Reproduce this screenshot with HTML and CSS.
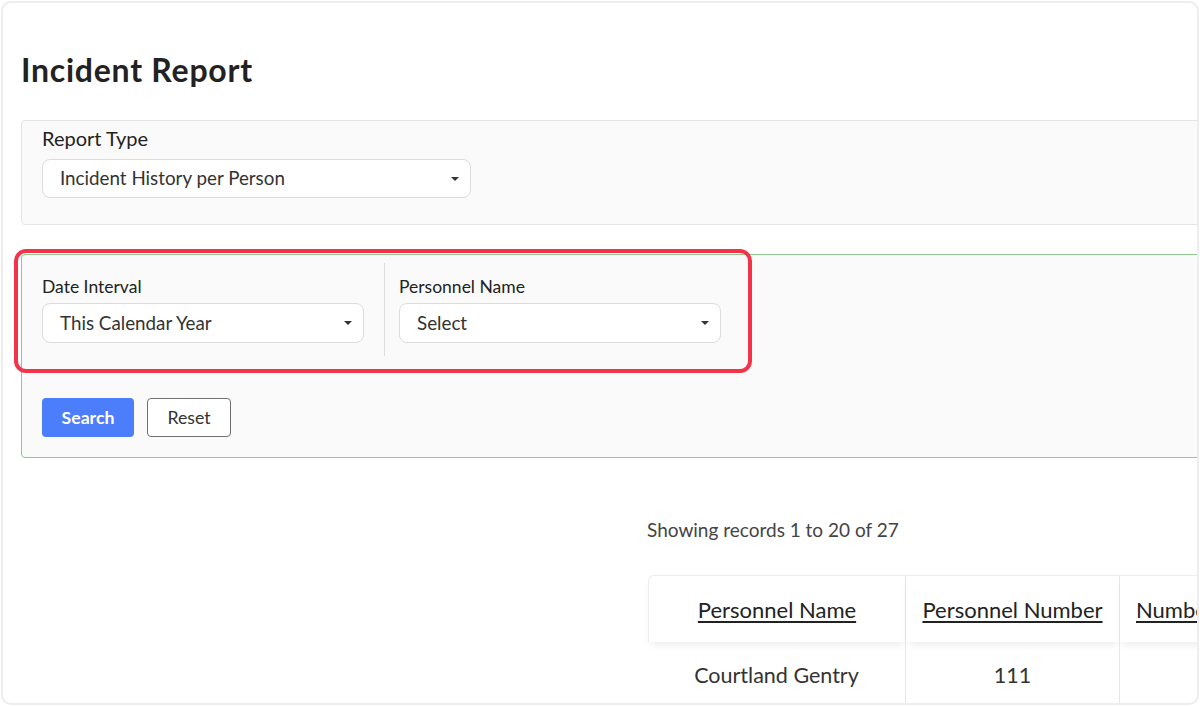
FILE: index.html
```html
<!DOCTYPE html>
<html lang="en">
<head>
	<meta charset="UTF-8">
	<title>Incident Report</title>
	<link rel="stylesheet" href="styles.css">
</head>
<body>
	<div class="page">
		<div class="content">
			<h1>Incident Report</h1>

			<div class="panel report_type">
				<label>Report Type</label>
				<div class="select">
					<span>Incident History per Person</span>
					<svg class="caret" viewBox="0 0 8 4"><path d="M0 0h8L4 4z"/></svg>
				</div>
			</div>

			<div class="panel filters">
				<div class="filter_row">
					<div class="field">
						<label>Date Interval</label>
						<div class="select">
							<span>This Calendar Year</span>
							<svg class="caret" viewBox="0 0 8 4"><path d="M0 0h8L4 4z"/></svg>
						</div>
					</div>
					<div class="field">
						<label>Personnel Name</label>
						<div class="select">
							<span>Select</span>
							<svg class="caret" viewBox="0 0 8 4"><path d="M0 0h8L4 4z"/></svg>
						</div>
					</div>
				</div>
				<div class="actions">
					<button class="btn_search">Search</button>
					<button class="btn_reset">Reset</button>
				</div>
				<div class="highlight"></div>
			</div>

			<div class="results">
				<div class="count">Showing records 1 to 20 of 27</div>
				<table>
					<thead>
						<tr>
							<th class="col_name"><a>Personnel Name</a></th>
							<th class="col_number"><a>Personnel Number</a></th>
							<th class="col_count"><a>Number of Incidents</a></th>
						</tr>
					</thead>
					<tbody>
						<tr>
							<td>Courtland Gentry</td>
							<td>111</td>
							<td>3</td>
						</tr>
					</tbody>
				</table>
			</div>
		</div>
	</div>
</body>
</html>
```

FILE: styles.css
```css
*{box-sizing:border-box;}
html,body{margin:0;height:100%;overflow:hidden;background:#fff;}
body{font-family:Lato,"Noto Sans",sans-serif;color:#222;}

.page{margin:1px;height:704px;border:2px solid #ececf1;border-radius:10px;overflow:hidden;background:#fff;}
.content{width:1400px;padding:49px 0 0 18px;}
h1{margin:0 0 32px;font-size:32px;line-height:36px;font-weight:700;letter-spacing:0.75px;color:#222;}

.panel{background:#fafafa;border:1px solid #e4e4e4;border-radius:4px;}
.report_type{padding:7px 20px 26px;}
.report_type label{display:block;font-size:20px;line-height:21px;margin-bottom:10px;}

.select{display:flex;align-items:center;justify-content:space-between;height:39px;padding:0 11px 0 17px;background:#fff;border:1px solid #dcdcdc;border-radius:8px;font-size:18.8px;color:#333;}
.select span{margin-top:-2px;}
.report_type .select{width:429px;}
.caret{width:8px;height:4px;fill:#333;}

.filters{position:relative;margin-top:29px;border-color:#90c890;padding:8px 20px 20px;}
.filter_row{display:flex;}
.field{padding:14px 20px 13px 0;}
.field+.field{border-left:1px solid #dedede;padding-left:14px;}
.field label{display:block;font-size:17.5px;line-height:20px;margin-bottom:6px;}
.field .select{width:322px;height:40px;}

.actions{display:flex;gap:13px;margin-top:42px;}
button{font-family:inherit;font-size:17.7px;height:39px;border-radius:4px;cursor:pointer;}
.btn_search{width:92px;background:#4c7dfb;border:none;color:#fff;font-weight:700;}
.btn_reset{width:84px;background:#fff;border:1px solid #707070;color:#333;}

.highlight{position:absolute;left:-8px;top:-6px;width:738px;height:124px;border:4px solid #f3334a;border-radius:12px;pointer-events:none;}

.results{margin:61px 0 0 626px;}
.count{font-size:19px;line-height:22px;color:#444;}
table{margin:34px 0 0 1px;border-collapse:separate;border-spacing:0;}
th{height:67px;background:#fff;font-size:22px;font-weight:400;color:#222;border-top:1px solid #eee;border-right:1px solid #e6e6e6;box-shadow:0 5px 8px -3px rgba(0,0,0,0.09);}
th a{text-decoration:underline;text-underline-offset:3px;}
th:first-child{border-left:1px solid #eee;border-top-left-radius:6px;}
.col_name{width:258px;}
.col_number{width:214px;}
.col_count{padding:0 16px;}
td{height:66px;text-align:center;font-size:21.5px;color:#333;border-right:1px solid #e6e6e6;}
```
